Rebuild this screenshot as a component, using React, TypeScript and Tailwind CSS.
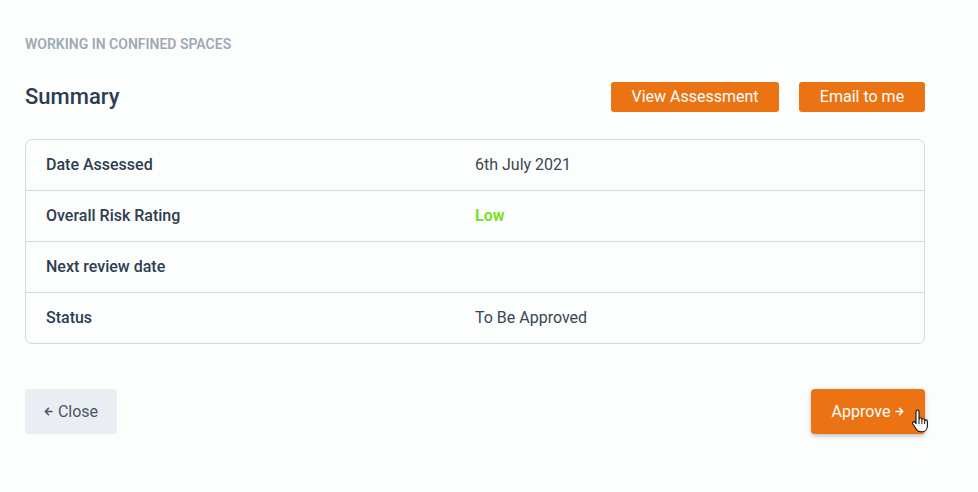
const rows = [
  { label: 'Date Assessed', value: '6th July 2021' },
  { label: 'Overall Risk Rating', value: 'Low', tone: 'low' },
  { label: 'Next review date', value: '' },
  { label: 'Status', value: 'To Be Approved' },
];

function Arrow({ dir }: { dir: 'left' | 'right' }) {
  return (
    <svg width="9" height="9" viewBox="0 0 9 9" className={dir === 'left' ? '' : 'rotate-180'}>
      <path
        d="M8 4.5H1.5M4.5 1.3L1.3 4.5l3.2 3.2"
        fill="none"
        stroke="currentColor"
        strokeWidth="1.6"
        strokeLinecap="round"
        strokeLinejoin="round"
      />
    </svg>
  );
}

function HandCursor() {
  return (
    <svg
      className="absolute left-[100px] top-[20px] pointer-events-none"
      width="18"
      height="24"
      viewBox="0 0 18 24"
    >
      <path
        d="M5 2.5c0-.9.7-1.5 1.5-1.5S8 1.6 8 2.5V10c.2-.8.8-1.2 1.5-1.2.8 0 1.4.6 1.4 1.4v.6c.2-.7.8-1.1 1.4-1.1.8 0 1.4.6 1.4 1.4v.8c.2-.6.7-1 1.3-1 .8 0 1.4.6 1.4 1.4V17c0 3.3-2.3 5.8-5.6 5.8H9.8c-2 0-3.4-.9-4.5-2.6L1.8 15c-.5-.8-.3-1.7.4-2.1.7-.4 1.5-.2 2 .5L5 14.6V2.5z"
        fill="#fff"
        stroke="#111"
        strokeWidth="1.1"
        strokeLinejoin="round"
      />
      <path d="M8 10v5M10.9 11v4M13.7 12v3" stroke="#111" strokeWidth="1" />
    </svg>
  );
}

export default function App() {
  return (
    <div
      className="min-h-[492px] w-full bg-[#fcfdfd] text-[#2c3e50]"
      style={{ fontFamily: 'Roboto, "Liberation Sans", sans-serif' }}
    >
      <div className="w-[900px] ml-[25px] pt-[36px]">
        <p className="text-[14px] leading-[16px] font-semibold uppercase text-[#9ea9b4]">
          Working in confined spaces
        </p>

        <div className="mt-[30px] flex items-center justify-between">
          <h2 className="text-[22px] leading-[30px] font-medium text-[#2c3e50]">Summary</h2>
          <div className="flex gap-[20px]">
            <button className="h-[30px] w-[168px] rounded-[3px] bg-[#eb7314] text-[16px] text-white">
              View Assessment
            </button>
            <button className="h-[30px] w-[126px] rounded-[3px] bg-[#eb7314] text-[16px] text-white">
              Email to me
            </button>
          </div>
        </div>

        <div className="mt-[27px] rounded-[7px] border border-[#d6d9dc] bg-[#fcfdfd]">
          {rows.map((row, i) => (
            <div
              key={row.label}
              className={`grid grid-cols-2 items-center px-[20px] ${
                i > 0 ? 'h-[51px] border-t border-[#d6d9dc]' : 'h-[50px]'
              }`}
            >
              <span className="text-[16px] font-medium text-[#2c3e50]">{row.label}</span>
              <span
                className={`text-[16px] ${
                  row.tone === 'low' ? 'font-bold text-[#7ddf2b]' : 'text-[#3a4654]'
                }`}
              >
                {row.value}
              </span>
            </div>
          ))}
        </div>

        <div className="mt-[45px] flex items-center justify-between">
          <button className="h-[45px] w-[92px] rounded-[4px] bg-[#eaedf1] text-[16px] text-[#4a5663] flex items-center justify-center gap-[5px]">
            <Arrow dir="left" />
            <span>Close</span>
          </button>
          <div className="relative">
            <button className="h-[45px] w-[114px] rounded-[4px] bg-[#eb7314] text-[16px] text-white shadow-[0_2px_4px_rgba(0,0,0,0.25)] flex items-center justify-center gap-[5px]">
              <span>Approve</span>
              <Arrow dir="right" />
            </button>
            <HandCursor />
          </div>
        </div>
      </div>
    </div>
  );
}
